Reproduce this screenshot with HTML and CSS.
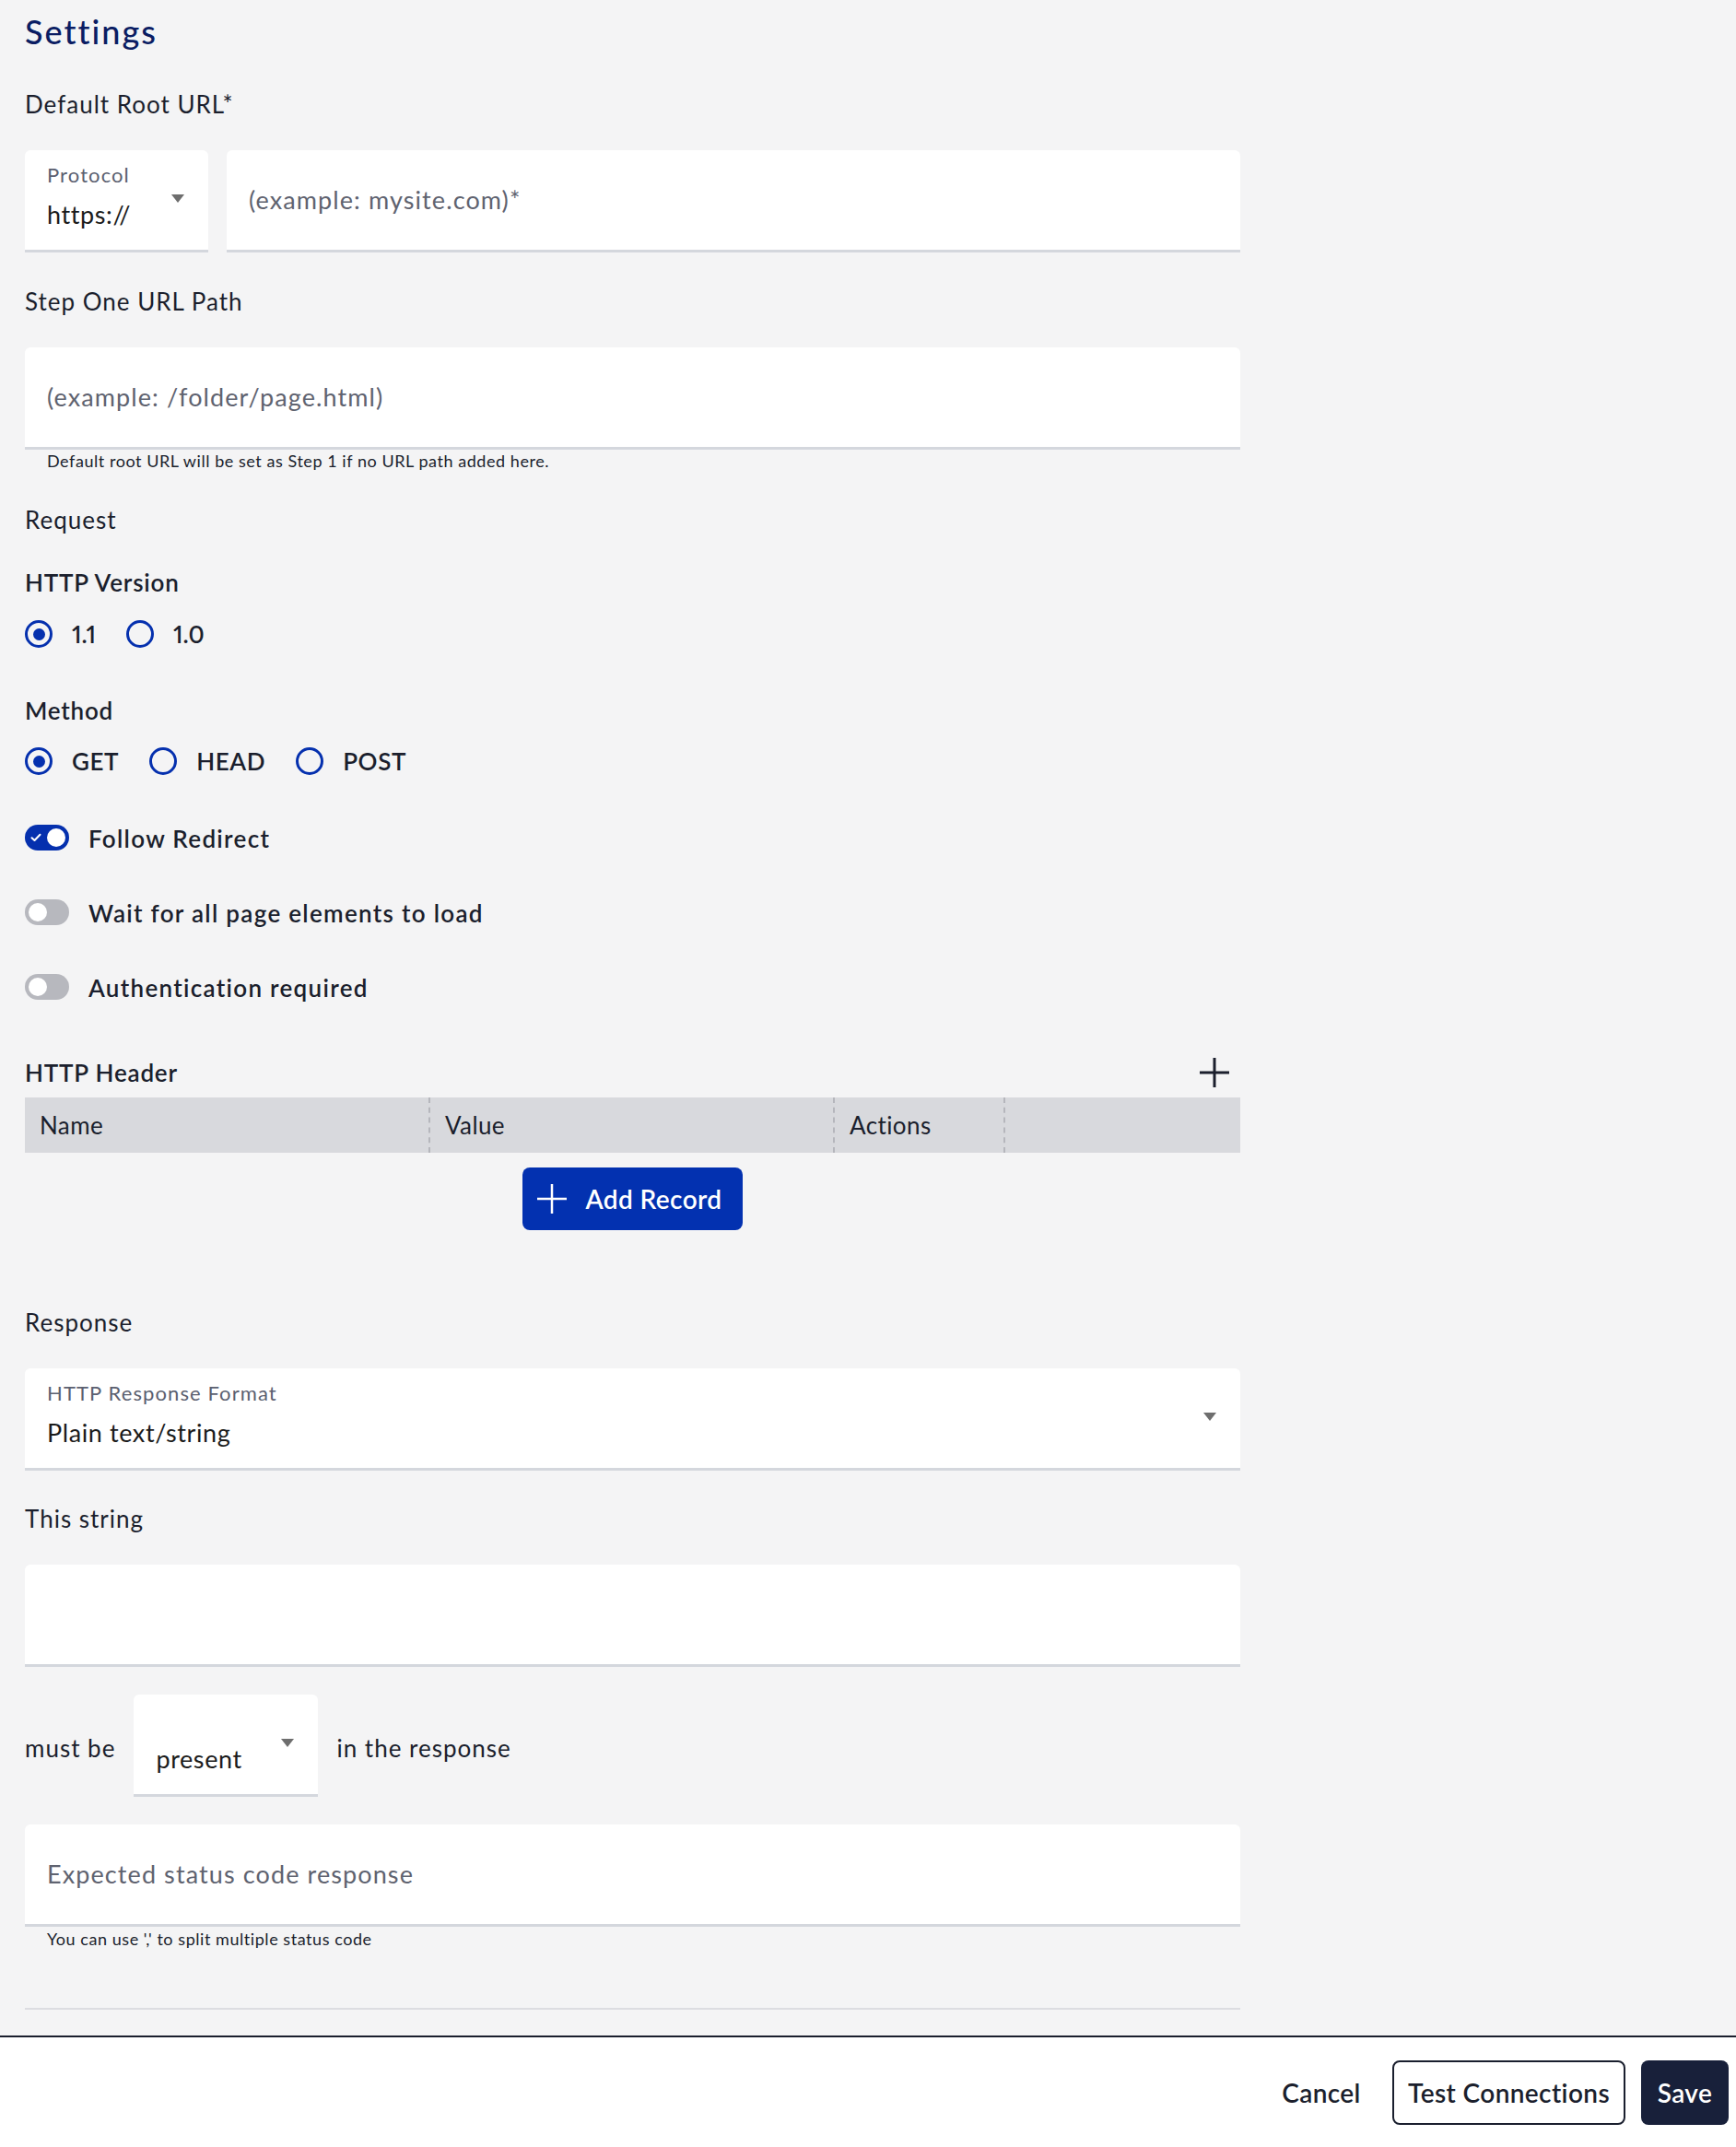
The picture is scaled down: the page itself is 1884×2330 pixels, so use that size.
FILE: index.html
```html
<!DOCTYPE html>
<html lang="en">
<head>
<meta charset="utf-8">
<title>Settings</title>
<link rel="stylesheet" href="styles.css">
</head>
<body>
<main class="page">
  <h1 class="title">Settings</h1>

  <div class="label root-label">Default Root URL*</div>
  <div class="url-row">
    <div class="select protocol">
      <div class="select-body">
        <div class="select-label">Protocol</div>
        <div class="select-value">https://</div>
      </div>
      <span class="caret"></span>
    </div>
    <div class="text-input grow">(example: mysite.com)*</div>
  </div>

  <div class="label path-label">Step One URL Path</div>
  <div class="text-input path-input">(example: /folder/page.html)</div>
  <div class="hint">Default root URL will be set as Step 1 if no URL path added here.</div>

  <div class="label request-label">Request</div>

  <div class="label strong version-title">HTTP Version</div>
  <div class="radio-row version-row">
    <div class="radio-item"><span class="radio checked"></span><span class="num">1.1</span></div>
    <div class="radio-item"><span class="radio"></span><span class="num">1.0</span></div>
  </div>

  <div class="label strong method-title">Method</div>
  <div class="radio-row method-row">
    <div class="radio-item"><span class="radio checked"></span><span>GET</span></div>
    <div class="radio-item"><span class="radio"></span><span>HEAD</span></div>
    <div class="radio-item"><span class="radio"></span><span>POST</span></div>
  </div>

  <div class="toggle-row first-toggle">
    <span class="switch on">
      <svg class="check" width="12" height="10" viewBox="0 0 12 10"><path d="M1.5 5.2 L4.5 8 L10.5 1.8" fill="none" stroke="#fff" stroke-width="2" stroke-linecap="round" stroke-linejoin="round"/></svg>
      <span class="knob"></span>
    </span>
    <span class="toggle-label">Follow Redirect</span>
  </div>
  <div class="toggle-row next-toggle">
    <span class="switch"><span class="knob"></span></span>
    <span class="toggle-label">Wait for all page elements to load</span>
  </div>
  <div class="toggle-row next-toggle">
    <span class="switch"><span class="knob"></span></span>
    <span class="toggle-label">Authentication required</span>
  </div>

  <div class="header-row">
    <span class="label strong">HTTP Header</span>
    <svg class="plus" width="32" height="32" viewBox="0 0 32 32"><path d="M16 0 V32 M0 16 H32" stroke="#1b1f2d" stroke-width="3" fill="none"/></svg>
  </div>
  <div class="table-head">
    <div class="th">Name</div>
    <div class="th dashed">Value</div>
    <div class="th dashed">Actions</div>
    <div class="th dashed"></div>
  </div>
  <div class="add-wrap">
    <button class="add-btn" type="button">
      <svg width="32" height="32" viewBox="0 0 32 32"><path d="M16 0 V32 M0 16 H32" stroke="#fff" stroke-width="2.5" fill="none"/></svg>
      <span>Add Record</span>
    </button>
  </div>

  <div class="label response-label">Response</div>
  <div class="select full response-select">
    <div class="select-body">
      <div class="select-label">HTTP Response Format</div>
      <div class="select-value">Plain text/string</div>
    </div>
    <span class="caret"></span>
  </div>

  <div class="label string-label">This string</div>
  <div class="text-input string-input"></div>

  <div class="must-row">
    <span class="label inline">must be</span>
    <div class="select present">
      <div class="select-body">
        <div class="select-label"></div>
        <div class="select-value">present</div>
      </div>
      <span class="caret"></span>
    </div>
    <span class="label inline">in the response</span>
  </div>

  <div class="text-input status-input">Expected status code response</div>
  <div class="hint hint-status">You can use ',' to split multiple status code</div>

  <div class="divider"></div>
</main>
<footer class="footer">
  <button class="btn cancel" type="button">Cancel</button>
  <button class="btn outline" type="button">Test Connections</button>
  <button class="btn primary" type="button">Save</button>
</footer>
</body>
</html>
```

FILE: styles.css
```css
* { box-sizing: border-box; }
html, body { margin: 0; padding: 0; }
body {
  width: 1884px;
  min-height: 2330px;
  background: #f4f4f5;
  font-family: Lato, "Open Sans", sans-serif;
  color: #1b1f2d;
}
.page {
  width: 1346px;
  padding: 12px 0 0 27px;
}
.title {
  margin: 0;
  font-size: 36px;
  line-height: 44px;
  font-weight: 500;
  color: #0b1d63;
  letter-spacing: 2px;
}
.label {
  font-size: 26px;
  line-height: 32px;
  font-weight: 400;
  letter-spacing: 1px;
}
.strong { font-weight: 600; letter-spacing: 0.8px; }
.root-label { margin-top: 41px; }
.url-row {
  margin-top: 34px;
  display: flex;
  gap: 20px;
}
.grow { flex: 1; }
.path-label { margin-top: 37px; }
.path-input { margin-top: 34px; }
.hint {
  margin-top: 2px;
  padding-left: 24px;
  font-size: 18px;
  line-height: 20px;
  color: #1b1f2d;
  letter-spacing: 0.55px;
}
.request-label { margin-top: 38px; }
.version-title { margin-top: 36px; }

/* inputs */
.text-input {
  height: 111px;
  background: #fff;
  border-bottom: 3px solid #d4d7dd;
  border-radius: 6px 6px 0 0;
  padding: 0 24px;
  display: flex;
  align-items: center;
  font-size: 27px;
  line-height: 32px;
  color: #5f6370;
  letter-spacing: 1.1px;
}
.select {
  height: 111px;
  background: #fff;
  border-bottom: 3px solid #d4d7dd;
  border-radius: 6px 6px 0 0;
  padding: 14px 26px 0 24px;
  display: flex;
  align-items: flex-start;
}
.select-body { flex: 1; min-width: 0; }
.select-label {
  height: 26px;
  font-size: 22px;
  line-height: 26px;
  color: #5b6070;
  letter-spacing: 1.1px;
}
.select-value {
  margin-top: 14px;
  font-size: 27px;
  line-height: 32px;
  color: #1b1b1b;
  letter-spacing: 0.6px;
}
.caret {
  margin-top: 34px;
  width: 0;
  height: 0;
  border-left: 7.5px solid transparent;
  border-right: 7.5px solid transparent;
  border-top: 9px solid #6e6e6e;
}
.protocol { width: 199px; flex: none; }
.present { width: 200px; flex: none; }

/* radios */
.radio-row {
  display: flex;
  align-items: center;
  gap: 33px;
  height: 30px;
}
.version-row { margin-top: 25px; }
.method-title { margin-top: 52px; }
.method-row { margin-top: 24px; }
.radio-item {
  display: flex;
  align-items: center;
  gap: 21px;
  font-size: 26px;
  line-height: 30px;
  font-weight: 600;
  letter-spacing: 0.6px;
}
.num {
  font-variant-numeric: proportional-nums;
  letter-spacing: 0;
}
.radio {
  width: 30px;
  height: 30px;
  border: 3px solid #0530ae;
  border-radius: 50%;
  display: flex;
  align-items: center;
  justify-content: center;
}
.radio.checked::after {
  content: "";
  width: 13px;
  height: 13px;
  border-radius: 50%;
  background: #0530ae;
}

/* toggles */
.toggle-row {
  display: flex;
  align-items: center;
  gap: 21px;
  height: 28px;
}
.first-toggle { margin-top: 54px; }
.next-toggle { margin-top: 53px; }
.switch {
  width: 48px;
  height: 28px;
  border-radius: 14px;
  background: #b7b8be;
  display: flex;
  align-items: center;
  padding: 0 4px;
  flex: none;
}
.switch.on {
  background: #0530ae;
  justify-content: space-between;
  padding: 0 4px 0 6px;
}
.knob {
  width: 20px;
  height: 20px;
  border-radius: 50%;
  background: #fff;
}
.check { display: block; }
.toggle-label {
  font-size: 26px;
  line-height: 28px;
  font-weight: 600;
  letter-spacing: 1.3px;
  padding-top: 2px;
}

/* http header table */
.header-row {
  margin-top: 63px;
  height: 32px;
  display: flex;
  align-items: center;
  justify-content: space-between;
  padding-right: 12px;
}
.plus { display: block; }
.table-head {
  margin-top: 11px;
  height: 60px;
  background: #d8d9dd;
  display: grid;
  grid-template-columns: 438px 439px 185px 1fr;
}
.th {
  padding-left: 16px;
  font-size: 26px;
  line-height: 60px;
  letter-spacing: 0.4px;
}
.th.dashed { border-left: 2px dashed #b5b6bc; }
.add-wrap {
  margin-top: 16px;
  display: flex;
  justify-content: center;
}
.add-btn {
  height: 68px;
  border: none;
  border-radius: 8px;
  background: #0331b0;
  color: #fff;
  display: flex;
  align-items: center;
  gap: 20px;
  padding: 0 22px 0 16px;
  font-family: Lato, "Open Sans", sans-serif;
  font-size: 28px;
  font-weight: 600;
  letter-spacing: 0.4px;
}
.add-btn svg { display: block; }

/* response */
.response-label { margin-top: 84px; }
.response-select { margin-top: 34px; }
.string-label { margin-top: 36px; }
.string-input { margin-top: 34px; }
.must-row {
  margin-top: 30px;
  display: flex;
  align-items: center;
  gap: 20px;
}
.label.inline { padding-top: 4px; }
.status-input { margin-top: 30px; }
.hint-status { margin-top: 3px; }
.divider {
  margin-top: 65px;
  height: 2px;
  background: #dcdde1;
}

/* footer */
.footer {
  margin-top: 28px;
  height: 121px;
  background: #fff;
  border-top: 2px solid #1a1f2e;
  display: flex;
  justify-content: flex-end;
  align-items: center;
  gap: 17px;
  padding-right: 8px;
}
.btn {
  height: 70px;
  font-family: Lato, "Open Sans", sans-serif;
  font-size: 28px;
  font-weight: 600;
  letter-spacing: 0.4px;
  color: #1b1f2d;
  border-radius: 8px;
  padding: 0;
}
.cancel {
  width: 120px;
  background: transparent;
  border: none;
}
.outline {
  width: 253px;
  background: #fff;
  border: 2px solid #1a1f2e;
}
.primary {
  width: 95px;
  background: #18203a;
  border: none;
  color: #fff;
}
```
